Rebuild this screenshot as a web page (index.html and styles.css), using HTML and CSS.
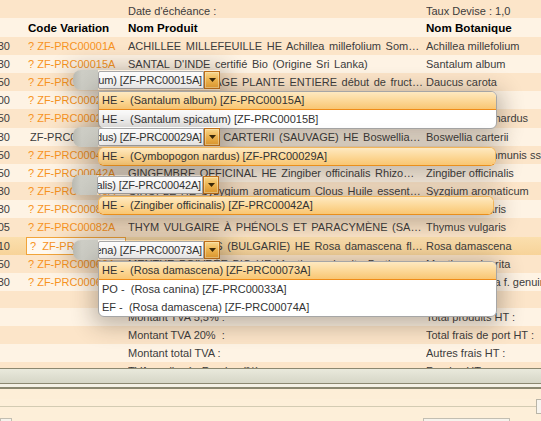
FILE: index.html
```html
<!DOCTYPE html>
<html lang="fr">
<head>
<meta charset="utf-8">
<title>Variations</title>
<link rel="stylesheet" href="styles.css">
</head>
<body>
<div class="screen">
  <div class="grid">
    <div class="row top dark"><span class="num"></span><span class="code"></span><span class="prod">Date d'échéance :</span><span class="bot">Taux Devise : 1,0</span></div>
    <div class="row head light"><span class="num"></span><span class="code">Code Variation</span><span class="prod">Nom Produit</span><span class="bot">Nom Botanique</span></div>
    <div class="row data dark"><span class="num"><i>30</i></span><span class="code">? ZF-PRC00001A</span><span class="prod">ACHILLEE MILLEFEUILLE HE Achillea millefolium Sommités fleuries</span><span class="bot">Achillea millefolium</span></div>
    <div class="row data light"><span class="num"><i>30</i></span><span class="code">? ZF-PRC00015A</span><span class="prod">SANTAL D'INDE certifié Bio (Origine Sri Lanka)</span><span class="bot">Santalum album</span></div>
    <div class="row data dark"><span class="num"><i>50</i></span><span class="code">? ZF-PRC00035A</span><span class="prod">CAROTTE SAUVAGE PLANTE ENTIERE début de fructification</span><span class="bot">Daucus carota</span></div>
    <div class="row data light"><span class="num"><i>00</i></span><span class="code">? ZF-PRC00021A</span><span class="prod">CITRON ZESTE HE Citrus limon</span><span class="bot">Citrus limon</span></div>
    <div class="row data dark"><span class="num"><i>50</i></span><span class="code">? ZF-PRC00027A</span><span class="prod">CITRONNELLE DE CEYLAN HE Cymbopogon nardus</span><span class="bot">Cymbopogon nardus</span></div>
    <div class="row data light"><span class="num"><i>30</i></span><span class="code plain">ZF-PRC00029A</span><span class="prod">ENCENS OLIBAN CARTERII (SAUVAGE) HE Boswellia carterii résine</span><span class="bot">Boswellia carterii</span></div>
    <div class="row data dark"><span class="num"><i>50</i></span><span class="code">? ZF-PRC00040A</span><span class="prod">GENÉVRIER COMMUN HE Juniperus communis baies</span><span class="bot">Juniperus communis ssp. communis</span></div>
    <div class="row data light"><span class="num"><i>50</i></span><span class="code">? ZF-PRC00042A</span><span class="prod">GINGEMBRE OFFICINAL HE Zingiber officinalis Rhizome frais</span><span class="bot">Zingiber officinalis</span></div>
    <div class="row data dark"><span class="num"><i>30</i></span><span class="code">? ZF-PRC00045A</span><span class="prod">GIROFLE HE Syzygium aromaticum Clous Huile essentielle 100% pure</span><span class="bot">Syzgium aromaticum</span></div>
    <div class="row data light"><span class="num"><i>30</i></span><span class="code">? ZF-PRC00081A</span><span class="prod">THYM VULGAIRE À THYMOL HE Thymus vulgaris</span><span class="bot">Thymus vulgaris</span></div>
    <div class="row data dark"><span class="num"><i>05</i></span><span class="code">? ZF-PRC00082A</span><span class="prod">THYM VULGAIRE À PHÉNOLS ET PARACYMÈNE (SAUVAGE)</span><span class="bot">Thymus vulgaris</span></div>
    <div class="row data sel"><span class="num"><i>10</i></span><span class="code edit">?  ZF-PRC00073A</span><span class="prod">ROSE DE DAMAS (BULGARIE) HE Rosa damascena fleurs distillées</span><span class="bot">Rosa damascena</span></div>
    <div class="row data dark"><span class="num"><i>50</i></span><span class="code">? ZF-PRC00060A</span><span class="prod">MENTHE POIVRÉE BIO HE Mentha x piperita Partie aérienne</span><span class="bot">Mentha x piperita</span></div>
    <div class="row data light"><span class="num"><i>30</i></span><span class="code">? ZF-PRC00061A</span><span class="prod">MENTHE VERTE HE Mentha spicata Partie aérienne</span><span class="bot">Mentha spicata f. genuina</span></div>
    <div class="row gap dark"><span class="num"></span><span class="code"></span><span class="prod"></span><span class="bot"></span></div>
    <div class="row sum light"><span class="num"></span><span class="code"></span><span class="prod">Montant TVA 5,5% :</span><span class="bot">Total produits HT :</span></div>
    <div class="row sum dark"><span class="num"></span><span class="code"></span><span class="prod">Montant TVA 20%  :</span><span class="bot">Total frais de port HT :</span></div>
    <div class="row sum light"><span class="num"></span><span class="code"></span><span class="prod">Montant total TVA :</span><span class="bot">Autres frais HT :</span></div>
    <div class="row sum dark"><span class="num"></span><span class="code"></span><span class="prod">TVA appliquée Remise (%) :</span><span class="bot">Remise HT :</span></div>
  </div>

  <div class="splitter"></div>
  <div class="sep"></div>
  <div class="footer">
    <div class="fline"><div class="rule"></div><div class="rbox"></div></div>
    <div class="fbottom"><div class="fbox small"></div><div class="fbox wide"></div></div>
  </div>

  <!-- combo editors and their dropdown lists (overlays) -->
  <div class="combo ca">
    <div class="pill"></div>
    <div class="field"><span>HE -  (Santalum album) [ZF-PRC00015A]</span></div>
    <div class="btn"><svg width="7" height="4" viewBox="0 0 7 4"><path d="M0 0H7L3.5 4Z" fill="#3a2808"/></svg></div>
  </div>
  <div class="list la">
    <div class="item hot">HE -  (Santalum album) [ZF-PRC00015A]</div>
    <div class="item">HE -  (Santalum spicatum) [ZF-PRC00015B]</div>
  </div>

  <div class="combo cb">
    <div class="pill"></div>
    <div class="field"><span>HE -  (Cymbopogon nardus) [ZF-PRC00029A]</span></div>
    <div class="btn"><svg width="7" height="4" viewBox="0 0 7 4"><path d="M0 0H7L3.5 4Z" fill="#3a2808"/></svg></div>
  </div>
  <div class="list single lb">
    <div class="item hot">HE -  (Cymbopogon nardus) [ZF-PRC00029A]</div>
  </div>

  <div class="combo cc">
    <div class="pill"></div>
    <div class="field"><span>HE -  (Zingiber officinalis) [ZF-PRC00042A]</span></div>
    <div class="btn"><svg width="7" height="4" viewBox="0 0 7 4"><path d="M0 0H7L3.5 4Z" fill="#3a2808"/></svg></div>
  </div>
  <div class="list single lc">
    <div class="item hot">HE -  (Zingiber officinalis) [ZF-PRC00042A]</div>
  </div>

  <div class="combo cd">
    <div class="pill"></div>
    <div class="field"><span>HE -  (Rosa damascena) [ZF-PRC00073A]</span></div>
    <div class="btn"><svg width="7" height="4" viewBox="0 0 7 4"><path d="M0 0H7L3.5 4Z" fill="#3a2808"/></svg></div>
  </div>
  <div class="list ld">
    <div class="item hot">HE -  (Rosa damascena) [ZF-PRC00073A]</div>
    <div class="item">PO -  (Rosa canina) [ZF-PRC00033A]</div>
    <div class="item">EF -  (Rosa damascena) [ZF-PRC00074A]</div>
  </div>
</div>
</body>
</html>
```

FILE: styles.css
```css
* { box-sizing: border-box; margin: 0; padding: 0; }

body {
  width: 541px;
  height: 421px;
  overflow: hidden;
  font-family: "Liberation Sans", Arial, sans-serif;
  font-size: 11px;
  color: #3c3c3c;
  background: #fdeed7;
}

.screen {
  position: relative;
  width: 541px;
  height: 421px;
  overflow: hidden;
}

/* ---------- grid ---------- */
.grid {
  height: 368px;
  overflow: hidden;
  background: #fef3e4;
}

.row {
  display: grid;
  grid-template-columns: 28px 100px 298px 200px;
  height: 18.2px;
  line-height: 18.2px;
  white-space: pre;
}
.row > span {
  overflow: hidden;
  text-overflow: ellipsis;
}
.row > span.bot { text-overflow: clip; }
.dark  { background: #fce5c9; }
.light { background: #fef3e4; }

.row.top  { height: 18px; line-height: 22px; }
.row.head { height: 18.6px; line-height: 20.6px; font-weight: bold; font-size: 11.6px; color: #000; }
.row.gap  { height: 16.6px; }
.row.sum  { height: 18px; line-height: 18px; }

.num {
  display: flex;
  justify-content: flex-end;
  padding-right: 18px;
}
.num i { font-style: normal; }

.code { color: #f7931e; }
.head .code { color: #000; }
.code.plain { color: #3c3c3c; padding-left: 2px; }

.prod { padding-right: 3px; }
.data .prod { word-spacing: 1.5px; }

.row.sel {
  background: linear-gradient(#fbdfae, #f7d399);
}
.code.edit {
  margin-left: -2px;
  margin-right: 2px;
  padding-left: 3px;
  border: 1px solid #f1a43a;
  background: #fff9f0;
  line-height: 16.2px;
  text-overflow: clip;
}

/* ---------- lower panel ---------- */
.splitter {
  height: 16px;
  border-top: 1px solid #8b8770;
  border-bottom: 1px solid #8b8770;
  background: linear-gradient(#e9e9dc, #d6d6c7);
}
.sep {
  height: 5px;
  border-bottom: 2px solid #8b8770;
  background: #f4f1e6;
}
.footer {
  height: 32px;
  background: #fdefd9;
}
.fline {
  display: flex;
  align-items: center;
  height: 15px;
  margin-top: 10px;
}
.rule {
  flex: 1;
  border-top: 1px solid #d3cbb3;
}
.rbox {
  width: 5px;
  height: 15px;
  border: 1px solid #b9b5a8;
  border-right: none;
  background: #f7f4ee;
}
.fbottom {
  display: flex;
  margin-top: 4px;
}
.fbox {
  height: 8px;
  border: 1px solid #c2beb2;
  border-bottom: none;
  background: #f6f3ec;
}
.fbox.small { width: 12px; }
.fbox.wide  { width: 87px; margin-left: 411px; }

/* ---------- combo editors (overlays) ---------- */
.combo {
  position: absolute;
  left: 73px;
  display: flex;
  align-items: center;
  height: 20px;
  border-radius: 9px 0 0 9px;
  box-shadow: 0 3px 22px 5px rgba(45, 35, 25, 0.30);
}
.ca { top: 70px; }
.cb { top: 127px; }
.cc { top: 175px; left: 72px; }
.cd { top: 240px; }

.pill {
  width: 25px;
  height: 20px;
  border-radius: 8px 0 0 8px;
  background: linear-gradient(90deg, #b9b9b1, #cdcdc5 35%, #cbcbc3);
}
.field {
  width: 106px;
  height: 18px;
  display: flex;
  justify-content: flex-end;
  overflow: hidden;
  white-space: pre;
  padding-right: 1px;
  line-height: 16px;
  letter-spacing: -0.15px;
  background: #fff;
  border: 1px solid #a9a9a9;
  border-radius: 2px 0 0 2px;
  color: #333;
}
.btn {
  width: 16px;
  height: 18px;
  display: flex;
  align-items: center;
  justify-content: center;
  border: 1px solid #c0701a;
  background: linear-gradient(#fcda8e, #f7bb52 50%, #f3a631);
  box-shadow: inset 0 0 0 1px rgba(255, 236, 190, 0.55);
}

/* ---------- dropdown lists (overlays) ---------- */
.list {
  position: absolute;
  left: 98px;
  width: 399px;
  background: #fff;
  border: 1px solid #a6a6a6;
  border-radius: 2px 6px 6px 6px;
  box-shadow: 0 4px 22px 5px rgba(45, 35, 25, 0.30);
}
.la { top: 91px; }
.lb { top: 147px; width: 398px; }
.lc { top: 196px; width: 396px; }
.ld { top: 261px; }

.item {
  height: 18px;
  line-height: 18px;
  padding-left: 3px;
  white-space: pre;
  color: #333;
}
.item.hot {
  background: linear-gradient(#fee9c1, #fcd898 50%, #f9c672);
  border-bottom: 1px solid #ef8c19;
  border-radius: 0 5px 0 0;
  line-height: 17px;
}

.list.single {
  border: 1px solid #f2b65a;
  border-bottom-color: #e98f1c;
  border-radius: 6px;
  background: transparent;
}
.list.single .item.hot {
  height: 17px;
  border-bottom: none;
  border-radius: 5px;
}
```
